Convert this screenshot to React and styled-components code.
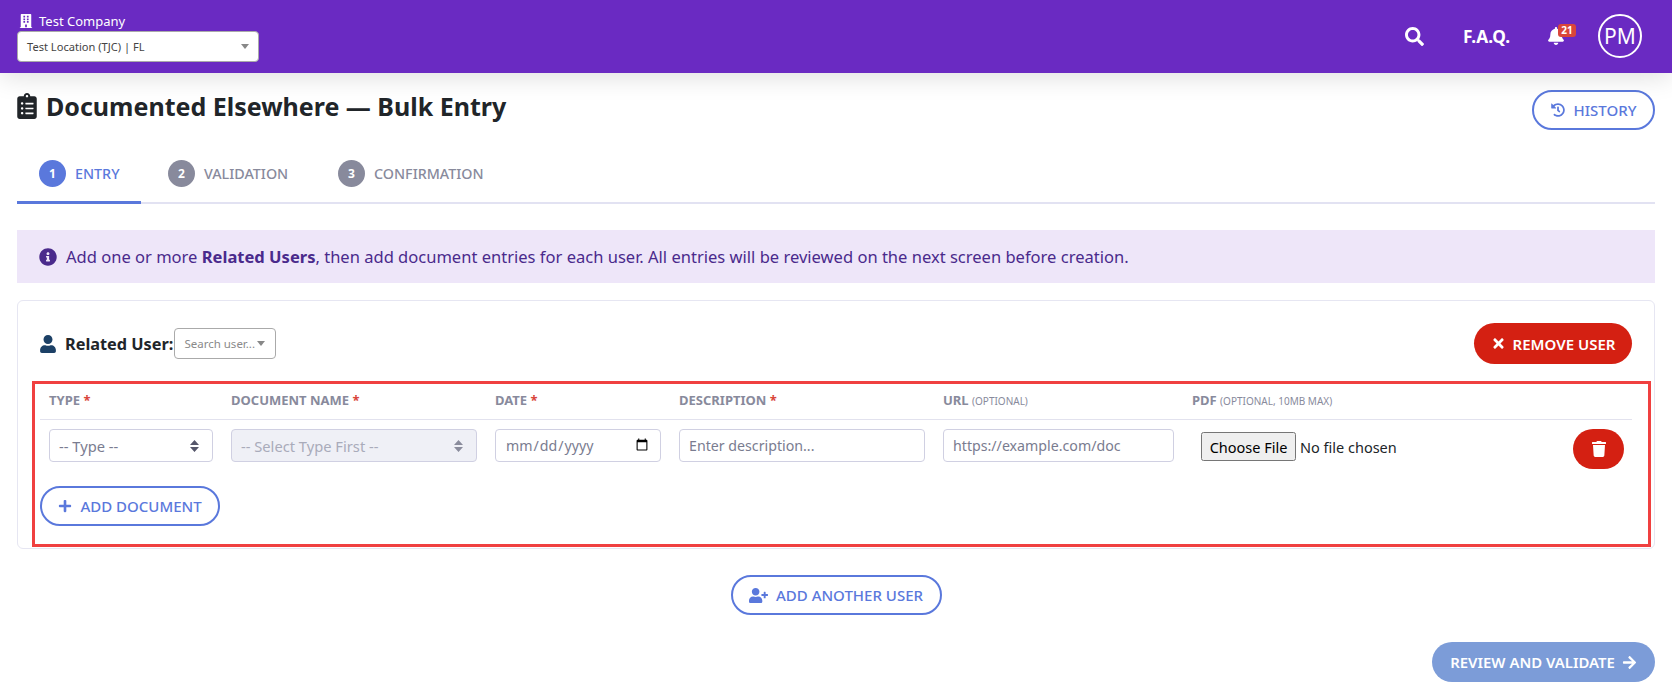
import React from 'react';
import styled, { createGlobalStyle } from 'styled-components';
import {
  FaArrowRight,
  FaBell,
  FaBuilding,
  FaClipboardList,
  FaHistory,
  FaInfoCircle,
  FaPlus,
  FaSearch,
  FaTimes,
  FaTrash,
  FaUser,
  FaUserPlus,
} from 'react-icons/fa';

const GlobalStyle = createGlobalStyle`
  html, body {
    margin: 0;
    padding: 0;
    background: #fff;
    font-family: "Noto Sans", "Open Sans", sans-serif;
    color: #212529;
  }
  * { box-sizing: border-box; }
`;

const TopBar = styled.header`
  height: 73px;
  background: #6a2ac2;
  display: flex;
  align-items: flex-start;
  justify-content: space-between;
  padding: 12px 30px 0 17px;
  box-shadow: 0 4px 26px rgba(0, 0, 0, 0.13);
  position: relative;
`;

const CompanyBlock = styled.div`
  width: 242px;
`;

const CompanyName = styled.div`
  display: flex;
  align-items: center;
  gap: 6px;
  height: 19px;
  padding: 0 0 2px 2px;
  color: #fff;
  font-size: 13px;
  svg { font-size: 14px; }
`;

const LocationSelect = styled.div`
  height: 31px;
  background: #fff;
  border: 1px solid #aaa;
  border-radius: 4px;
  display: flex;
  align-items: center;
  justify-content: space-between;
  padding: 0 9px;
  font-size: 11.1px;
  color: #444;
`;

const Caret = styled.span`
  width: 0;
  height: 0;
  border-left: 4px solid transparent;
  border-right: 4px solid transparent;
  border-top: 5px solid #888;
`;

const TopActions = styled.div`
  display: flex;
  align-items: center;
  height: 44px;
  margin-top: 2px;
  color: #fff;
`;

const SearchIcon = styled(FaSearch)`
  font-size: 19px;
  margin-right: 39px;
`;

const FaqLink = styled.span`
  font-size: 17.3px;
  font-weight: 700;
  margin-right: 37px;
`;

const BellWrap = styled.span`
  position: relative;
  display: flex;
  margin-right: 33px;
  font-size: 18px;
`;

const BellBadge = styled.span`
  position: absolute;
  top: -3px;
  left: 11px;
  width: 18px;
  height: 13px;
  border-radius: 3px;
  background: #d9463a;
  font-size: 10px;
  font-weight: 700;
  line-height: 13px;
  text-align: center;
`;

const Avatar = styled.span`
  width: 44px;
  height: 44px;
  border: 2px solid #fff;
  border-radius: 50%;
  display: flex;
  align-items: center;
  justify-content: center;
  font-size: 21px;
`;

const Page = styled.main`
  padding: 17px 17px 0 17px;
`;

const TitleRow = styled.div`
  display: flex;
  justify-content: space-between;
  align-items: flex-start;
  height: 56px;
`;

const Title = styled.h1`
  margin: -1px 0 0 -3px;
  display: flex;
  align-items: center;
  gap: 6px;
  font-size: 25px;
  line-height: 34px;
  font-weight: 700;
  color: #212529;
  svg { font-size: 26px; }
`;

const OutlineButton = styled.button`
  display: inline-flex;
  align-items: center;
  justify-content: center;
  gap: ${(p) => p.$gap || 8}px;
  height: 40px;
  width: ${(p) => p.$width}px;
  background: #fff;
  border: 2px solid #5a78dc;
  border-radius: 21px;
  color: #5a78dc;
  font-family: inherit;
  font-size: 15px;
  font-weight: 500;
  padding: 0;
`;

const Tabs = styled.nav`
  display: flex;
  height: 58px;
  border-bottom: 2px solid #e2e2f2;
`;

const Tab = styled.div`
  display: flex;
  align-items: center;
  gap: 9px;
  height: 58px;
  width: ${(p) => p.$width}px;
  padding: 0 0 1px 22px;
  font-size: 14.3px;
  font-weight: 500;
  color: ${(p) => (p.$active ? '#5a78dc' : '#888a9c')};
  border-bottom: 3px solid ${(p) => (p.$active ? '#5a78dc' : 'transparent')};
  margin-right: ${(p) => p.$gap || 0}px;
`;

const TabNumber = styled.span`
  width: 27px;
  height: 27px;
  border-radius: 50%;
  background: ${(p) => (p.$active ? '#5a78dc' : '#888a9c')};
  color: #fff;
  font-size: 12px;
  font-weight: 700;
  display: flex;
  align-items: center;
  justify-content: center;
`;

const InfoBanner = styled.div`
  margin-top: 26px;
  height: 53px;
  background: #eee6f9;
  display: flex;
  align-items: center;
  gap: 9px;
  padding-left: 22px;
  font-size: 16.55px;
  color: #4a2a8c;
  svg { font-size: 18px; }
  b { font-weight: 700; }
`;

const Card = styled.section`
  margin-top: 17px;
  height: 249px;
  border: 1px solid #e6e6f2;
  border-radius: 6px;
  padding: 22px 3px 0 14px;
`;

const UserRow = styled.div`
  display: flex;
  align-items: center;
  justify-content: space-between;
  height: 41px;
  padding: 0 19px 0 7px;
`;

const UserLabel = styled.div`
  display: flex;
  align-items: center;
  font-size: 16.3px;
  font-weight: 700;
  color: #212529;
`;

const UserIcon = styled(FaUser)`
  color: #1c4066;
  font-size: 18px;
  margin-right: 8px;
`;

const UserSelect = styled.div`
  width: 102px;
  height: 31px;
  border: 1px solid #aaa;
  border-radius: 4px;
  display: flex;
  align-items: center;
  justify-content: space-between;
  margin-left: 1px;
  padding: 0 10px 0 9px;
  font-size: 11.5px;
  font-weight: 400;
  color: #8a8a8a;
`;

const DangerButton = styled.button`
  display: inline-flex;
  align-items: center;
  justify-content: center;
  gap: 7px;
  width: 158px;
  height: 41px;
  border: none;
  border-radius: 21px;
  background: #d42012;
  color: #fff;
  font-family: inherit;
  font-size: 15px;
  font-weight: 600;
  padding: 0;
  svg { font-size: 15px; }
`;

const EntryFrame = styled.div`
  margin-top: 17px;
  height: 166px;
  border: 3px solid #f04040;
  padding: 0 16px 0 5px;
`;

const Columns = `
  display: grid;
  grid-template-columns: 164px 246px 166px 246px 231px 1fr 51px;
  column-gap: 18px;
  padding: 0 8px 0 9px;
`;

const HeaderRow = styled.div`
  ${Columns}
  height: 36px;
  padding-bottom: 4px;
  align-items: center;
  border-bottom: 1px solid #e2e2ee;
`;

const HeaderCell = styled.div`
  font-size: 13px;
  font-weight: 700;
  color: #888a9c;
  white-space: nowrap;
`;

const Required = styled.span`
  color: #d9463a;
`;

const Hint = styled.span`
  font-size: 10px;
  font-weight: 400;
`;

const EntryRow = styled.div`
  ${Columns}
  padding-top: 9px;
  align-items: start;
`;

const fieldStyles = `
  width: 100%;
  height: 33px;
  border: 1px solid #d0d0e2;
  border-radius: 4px;
  font-family: inherit;
  font-size: 14.2px;
  color: #7a7c90;
  background: #fff;
  padding: 0 9px;
  outline: none;
`;

const FakeSelect = styled.div`
  ${fieldStyles}
  font-size: 14.7px;
  display: flex;
  align-items: center;
  justify-content: space-between;
  background: ${(p) => (p.$disabled ? '#eff0f6' : '#fff')};
  color: ${(p) => (p.$disabled ? '#a9abba' : '#7a7c90')};
`;

const UpDown = styled.svg`
  width: 9px;
  height: 12px;
  margin-right: 4px;
  fill: ${(p) => (p.$disabled ? '#8a8c9c' : '#55566a')};
`;

const TextField = styled.input`
  ${fieldStyles}
  &::placeholder { color: #7a7c90; opacity: 1; }
`;

const DateField = styled.input`
  ${fieldStyles}
`;

const FileField = styled.input`
  margin: 3px 0 0 9px;
  font-family: inherit;
  font-size: 14.5px;
  color: #212529;
  width: 300px;

  &::file-selector-button {
    height: 29px;
    width: 95px;
    padding: 0;
    margin-right: 4px;
    font-family: inherit;
    font-size: 14.5px;
  }
`;

const DeleteButton = styled.button`
  width: 51px;
  height: 40px;
  border: none;
  border-radius: 20px;
  background: #d42012;
  color: #fff;
  display: flex;
  align-items: center;
  justify-content: center;
  font-size: 16px;
  padding: 0;
`;

const AddDocRow = styled.div`
  padding-top: 17px;
`;

const AddUserRow = styled.div`
  display: flex;
  justify-content: center;
  margin-top: 26px;
`;

const SubmitRow = styled.div`
  display: flex;
  justify-content: flex-end;
  margin-top: 27px;
`;

const SubmitButton = styled.button`
  display: inline-flex;
  align-items: center;
  justify-content: center;
  gap: 7px;
  width: 223px;
  height: 40px;
  border: none;
  border-radius: 20px;
  background: #7c9cd8;
  color: #fff;
  font-family: inherit;
  font-size: 14.9px;
  font-weight: 600;
  padding: 0;
`;

const Arrows = ({ disabled }) => (
  <UpDown viewBox="0 0 9 12" $disabled={disabled}>
    <path d="M4.5 0 L9 5 H0 Z M4.5 12 L0 7 H9 Z" />
  </UpDown>
);

const steps = [
  { n: 1, label: 'ENTRY', width: 124, gap: 5, active: true },
  { n: 2, label: 'VALIDATION', width: 165, gap: 5 },
  { n: 3, label: 'CONFIRMATION', width: 200 },
];

const App = () => (
  <>
    <GlobalStyle />
    <TopBar>
      <CompanyBlock>
        <CompanyName>
          <FaBuilding />
          Test Company
        </CompanyName>
        <LocationSelect>
          Test Location (TJC) | FL
          <Caret />
        </LocationSelect>
      </CompanyBlock>
      <TopActions>
        <SearchIcon />
        <FaqLink>F.A.Q.</FaqLink>
        <BellWrap>
          <FaBell />
          <BellBadge>21</BellBadge>
        </BellWrap>
        <Avatar>PM</Avatar>
      </TopActions>
    </TopBar>

    <Page>
      <TitleRow>
        <Title>
          <FaClipboardList />
          Documented Elsewhere — Bulk Entry
        </Title>
        <OutlineButton $width={123} $gap={9}>
          <FaHistory size={14} />
          HISTORY
        </OutlineButton>
      </TitleRow>

      <Tabs>
        {steps.map((step) => (
          <Tab key={step.n} $active={step.active} $width={step.width} $gap={step.gap}>
            <TabNumber $active={step.active}>{step.n}</TabNumber>
            {step.label}
          </Tab>
        ))}
      </Tabs>

      <InfoBanner>
        <FaInfoCircle />
        <span>
          Add one or more <b>Related Users</b>, then add document entries for each user. All entries will be reviewed on the next screen before creation.
        </span>
      </InfoBanner>

      <Card>
        <UserRow>
          <UserLabel>
            <UserIcon />
            Related User:
            <UserSelect>
              Search user...
              <Caret />
            </UserSelect>
          </UserLabel>
          <DangerButton>
            <FaTimes />
            REMOVE USER
          </DangerButton>
        </UserRow>

        <EntryFrame>
          <HeaderRow>
            <HeaderCell>TYPE <Required>*</Required></HeaderCell>
            <HeaderCell>DOCUMENT NAME <Required>*</Required></HeaderCell>
            <HeaderCell>DATE <Required>*</Required></HeaderCell>
            <HeaderCell>DESCRIPTION <Required>*</Required></HeaderCell>
            <HeaderCell>URL <Hint>(OPTIONAL)</Hint></HeaderCell>
            <HeaderCell>PDF <Hint>(OPTIONAL, 10MB MAX)</Hint></HeaderCell>
            <HeaderCell />
          </HeaderRow>
          <EntryRow>
            <FakeSelect>
              -- Type --
              <Arrows />
            </FakeSelect>
            <FakeSelect $disabled>
              -- Select Type First --
              <Arrows disabled />
            </FakeSelect>
            <DateField type="date" />
            <TextField placeholder="Enter description..." />
            <TextField placeholder="https://example.com/doc" />
            <FileField type="file" />
            <DeleteButton>
              <FaTrash />
            </DeleteButton>
          </EntryRow>
          <AddDocRow>
            <OutlineButton $width={180}>
              <FaPlus size={14} />
              ADD DOCUMENT
            </OutlineButton>
          </AddDocRow>
        </EntryFrame>
      </Card>

      <AddUserRow>
        <OutlineButton $width={211}>
          <FaUserPlus size={19} />
          ADD ANOTHER USER
        </OutlineButton>
      </AddUserRow>

      <SubmitRow>
        <SubmitButton>
          REVIEW AND VALIDATE
          <FaArrowRight size={15} />
        </SubmitButton>
      </SubmitRow>
    </Page>
  </>
);

export default App;
